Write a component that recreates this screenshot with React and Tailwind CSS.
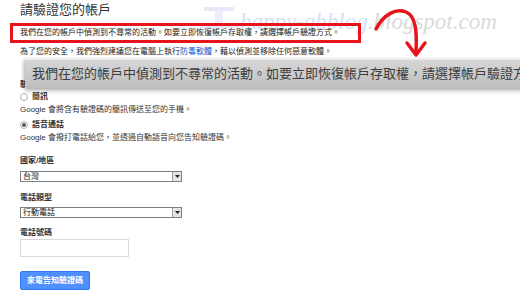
import React from 'react';

const cjk = { fontFamily: '"Liberation Sans", "Noto Sans CJK TC", sans-serif' };

function Radio({ checked, label }) {
  return (
    <div className="flex items-center h-[10px] text-[8px] leading-[10px] font-bold text-[#333]">
      <span className="w-[8px] h-[8px] rounded-full border border-[#b5b5b5] bg-white flex items-center justify-center">
        {checked && <span className="w-[4px] h-[4px] rounded-full bg-[#555]" />}
      </span>
      <span className="ml-[4px]">{label}</span>
    </div>
  );
}

function Select({ value }) {
  return (
    <div className="w-[162px] h-[11px] border border-[#7f7f7f] bg-white flex items-center justify-between">
      <span className="text-[8px] leading-[9px] text-[#111] pl-[2px]">{value}</span>
      <span className="w-[9px] h-[9px] bg-[#e4e4e4] border-l border-[#a0a0a0] flex items-center justify-center">
        <svg width="5" height="3" viewBox="0 0 5 3"><path d="M0 0h5L2.5 3z" fill="#222" /></svg>
      </span>
    </div>
  );
}

export default function App() {
  return (
    <div className="relative w-[520px] h-[292px] overflow-hidden bg-white" style={cjk}>
      {/* watermark */}
      <div className="absolute left-[200px] top-[7px] pointer-events-none">
        <svg width="38" height="22" viewBox="0 0 38 22">
          <rect x="4" y="0" width="30" height="4" fill="#ece6fa" />
          <rect x="15" y="4" width="8" height="12" fill="#f0ebfb" />
          <rect x="0" y="16" width="38" height="5" fill="#ebe4fa" />
        </svg>
      </div>
      <div
        className="absolute left-[240px] top-[8px] text-[23px] italic leading-[28px] pointer-events-none whitespace-nowrap"
        style={{ fontFamily: '"Liberation Serif", serif' }}
      >
        <span className="text-[#d6e2f6]">happy-ghblog</span>
        <span className="text-[#dadada]">.blogspot.com</span>
      </div>

      <main className="relative pl-[20px] pt-[2px]">
        <h1 className="text-[13px] leading-[16px] text-[#333] font-normal">請驗證您的帳戶</h1>

        <p className="-ml-[10px] mt-[5px] w-[351px] h-[20px] border-[3px] border-[#e8141b] pl-[7px] text-[8px] leading-[14px] text-[#222]">
          我們在您的帳戶中偵測到不尋常的活動。如要立即恢復帳戶存取權，請選擇帳戶驗證方式。
        </p>

        <p className="mt-[4px] text-[8px] leading-[10px] text-[#222]">
          為了您的安全，我們強烈建議您在電腦上執行<span className="text-[#1155cc]">防毒軟體</span>，藉以偵測並移除任何惡意軟體。
        </p>

        <h2 className="mt-[23px] text-[8px] leading-[10px] font-bold text-[#333]">驗證選項</h2>

        <div className="mt-[2px]"><Radio label="簡訊" /></div>
        <p className="mt-[3px] text-[8px] leading-[10px] text-[#333]">Google 會將含有驗證碼的簡訊傳送至您的手機。</p>

        <div className="mt-[5px]"><Radio checked label="語音通話" /></div>
        <p className="mt-[3px] text-[8px] leading-[10px] text-[#333]">Google 會撥打電話給您，並透過自動語音向您告知驗證碼。</p>

        <label className="block mt-[13px] text-[8px] leading-[10px] font-bold text-[#333]">國家/地區</label>
        <div className="mt-[5px]"><Select value="台灣" /></div>

        <label className="block mt-[11px] text-[8px] leading-[10px] font-bold text-[#333]">電話類型</label>
        <div className="mt-[4px]"><Select value="行動電話" /></div>

        <label className="block mt-[10px] text-[8px] leading-[10px] font-bold text-[#333]">電話號碼</label>
        <div className="mt-[1px] w-[109px] h-[18px] border border-[#d9d9d9] bg-white" />

        <button className="mt-[14px] w-[70px] h-[19px] rounded-[2px] bg-[#4d90fe] border border-[#3079ed] text-white text-[8px] font-bold leading-[17px]">
          來電告知驗證碼
        </button>
      </main>

      {/* magnified callout */}
      <div className="absolute left-[25px] top-[59px] w-[500px] h-[29px] border-t border-[#ececec] bg-gradient-to-b from-[#d6d6d6] via-[#cbcbcb] to-[#bdbdbd] shadow-[0_3px_4px_rgba(0,0,0,0.25),-2px_0_3px_rgba(0,0,0,0.15)] flex items-center">
        <span className="pl-[7px] text-[13px] leading-[16px] text-[#3c3c3c] whitespace-nowrap">
          我們在您的帳戶中偵測到不尋常的活動。如要立即恢復帳戶存取權，請選擇帳戶驗證方式。
        </span>
      </div>

      {/* red arrow */}
      <svg className="absolute left-[370px] top-[4px]" width="60" height="56" viewBox="0 0 60 56">
        <path d="M6 25 C14 10 26 4 36 8 C46 12 47 28 46 48" fill="none" stroke="#e8141b" strokeWidth="3.5" strokeLinecap="round" />
        <path d="M37 39 L46 51 L55 39" fill="none" stroke="#e8141b" strokeWidth="3.5" strokeLinecap="round" strokeLinejoin="round" />
      </svg>
    </div>
  );
}
